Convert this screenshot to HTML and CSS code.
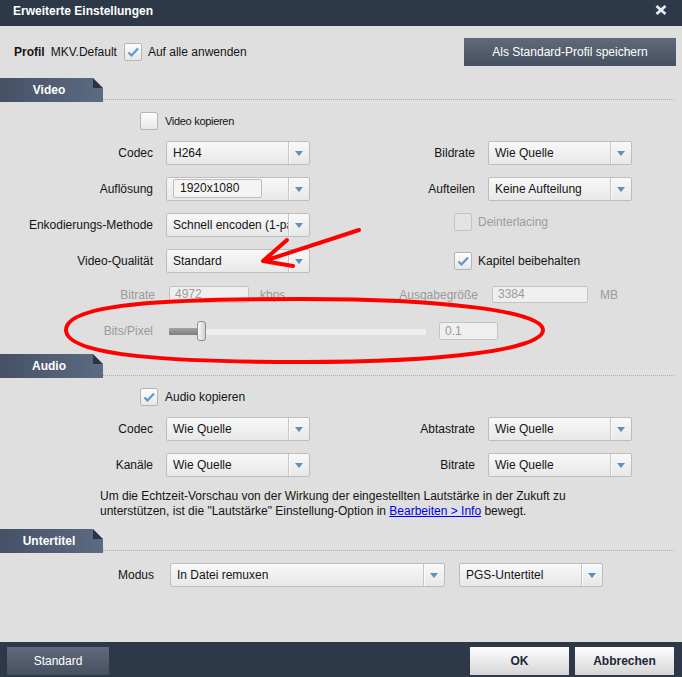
FILE: index.html
```html
<!DOCTYPE html>
<html lang="de">
<head>
<meta charset="utf-8">
<title>Erweiterte Einstellungen</title>
<link rel="stylesheet" href="styles.css">
</head>
<body>
<div class="dialog">
  <header class="titlebar">
    <span class="title">Erweiterte Einstellungen</span>
    <span class="close"><svg width="12" height="10" viewBox="0 0 12 10"><path d="M1.5 1 L10.5 9 M10.5 1 L1.5 9" stroke="#e8ebef" stroke-width="2.8" fill="none"/></svg></span>
  </header>

  <main class="content">
    <div class="profile-row">
      <span class="profile-label">Profil</span>
      <span class="profile-name">MKV.Default</span>
      <span class="check"><svg width="14" height="12" viewBox="0 0 14 12"><path d="M2.5 6.5 L5.5 9.5 L12 2.5" stroke="#5b97d1" stroke-width="2.2" fill="none"/></svg></span>
      <span class="check-text">Auf alle anwenden</span>
      <button class="btn-dark save">Als Standard-Profil speichern</button>
    </div>

    <div class="sec-head"><div class="tab">Video</div><div class="dots"></div></div>

    <div class="check-row">
      <span class="check"></span>
      <span class="small-text">Video kopieren</span>
    </div>

    <div class="grid">
      <span class="lbl">Codec</span>
      <div class="select"><span class="val">H264</span><span class="arr"></span></div>
      <span class="lbl">Bildrate</span>
      <div class="select"><span class="val">Wie Quelle</span><span class="arr"></span></div>

      <span class="lbl">Auflösung</span>
      <div class="select"><span class="val boxed"><span class="inner">1920x1080</span></span><span class="arr"></span></div>
      <span class="lbl">Aufteilen</span>
      <div class="select"><span class="val">Keine Aufteilung</span><span class="arr"></span></div>

      <span class="lbl">Enkodierungs-Methode</span>
      <div class="select"><span class="val">Schnell encoden (1-pass)</span><span class="arr"></span></div>
      <div class="grid-check top disabled">
        <span class="check"></span>
        <span>Deinterlacing</span>
      </div>

      <span class="lbl">Video-Qualität</span>
      <div class="select"><span class="val">Standard</span><span class="arr"></span></div>
      <div class="grid-check">
        <span class="check"><svg width="14" height="12" viewBox="0 0 14 12"><path d="M2.5 6.5 L5.5 9.5 L12 2.5" stroke="#5b97d1" stroke-width="2.2" fill="none"/></svg></span>
        <span>Kapitel beibehalten</span>
      </div>
    </div>

    <div class="drow">
      <div class="dleft">
        <span class="dlabel w-bitrate">Bitrate</span>
        <span class="dinput w80">4972</span>
        <span class="unit">kbps</span>
      </div>
      <div class="dright">
        <span class="dlabel w-size">Ausgabegröße</span>
        <span class="dinput w96">3384</span>
        <span class="unit mb">MB</span>
      </div>
    </div>

    <div class="brow">
      <span class="dlabel w-bits">Bits/Pixel</span>
      <div class="slider">
        <span class="fill"></span>
        <span class="thumb"></span>
        <span class="rest"></span>
      </div>
      <span class="dinput w59">0.1</span>
    </div>

    <div class="sec-head audio-head"><div class="tab">Audio</div><div class="dots"></div></div>

    <div class="check-row">
      <span class="check"><svg width="14" height="12" viewBox="0 0 14 12"><path d="M2.5 6.5 L5.5 9.5 L12 2.5" stroke="#5b97d1" stroke-width="2.2" fill="none"/></svg></span>
      <span>Audio kopieren</span>
    </div>

    <div class="grid">
      <span class="lbl">Codec</span>
      <div class="select"><span class="val">Wie Quelle</span><span class="arr"></span></div>
      <span class="lbl">Abtastrate</span>
      <div class="select"><span class="val">Wie Quelle</span><span class="arr"></span></div>

      <span class="lbl">Kanäle</span>
      <div class="select"><span class="val">Wie Quelle</span><span class="arr"></span></div>
      <span class="lbl">Bitrate</span>
      <div class="select"><span class="val">Wie Quelle</span><span class="arr"></span></div>
    </div>

    <p class="note">Um die Echtzeit-Vorschau von der Wirkung der eingestellten Lautstärke in der Zukuft zu<br>unterstützen, ist die "Lautstärke" Einstellung-Option in <a href="#">Bearbeiten &gt; Info</a> bewegt.</p>

    <div class="sec-head sub-head"><div class="tab">Untertitel</div><div class="dots"></div></div>

    <div class="mrow">
      <span class="lbl w-modus">Modus</span>
      <div class="select wide"><span class="val">In Datei remuxen</span><span class="arr"></span></div>
      <div class="select subsel"><span class="val">PGS-Untertitel</span><span class="arr"></span></div>
    </div>
  </main>

  <footer class="bottombar">
    <button class="btn-dark std">Standard</button>
    <button class="btn-light ok">OK</button>
    <button class="btn-light cancel">Abbrechen</button>
  </footer>
</div>

<svg class="annot" width="682" height="677" viewBox="0 0 682 677">
  <path d="M66 330 C66 302 180 299 304 299 C440 299 543 311 543 330 C543 350 440 362 304 362 C180 362 66 357 66 330 Z" fill="none" stroke="#ff0000" stroke-width="4"/>
  <path d="M359 230 L264 261 M287 240 L263 261 L293 266" fill="none" stroke="#ff0000" stroke-width="4" stroke-linecap="round" stroke-linejoin="round"/>
</svg>
</body>
</html>
```

FILE: styles.css
```css
* { box-sizing: border-box; }
html, body { margin: 0; padding: 0; }
body {
  width: 682px;
  height: 677px;
  overflow: hidden;
  position: relative;
  background: #dfdfdf;
  font-family: "Liberation Sans", Arial, sans-serif;
  font-size: 12px;
  color: #141414;
}
.dialog { display: flex; flex-direction: column; height: 677px; }

.titlebar {
  height: 26px;
  flex: none;
  background: #2d3849;
  color: #fff;
  display: flex;
  align-items: flex-start;
  justify-content: space-between;
  padding: 4px 15px 0 13px;
}
.title { font-weight: bold; line-height: 14px; }
.close { padding-top: 1px; }
.close svg { display: block; }

.content { flex: 1; }

.profile-row {
  display: flex;
  align-items: center;
  height: 28px;
  margin: 12px 6px 0 14px;
}
.profile-label { font-weight: bold; margin-right: 6px; }
.profile-name { margin-right: 7px; }
.check-text { margin-left: 6px; }

.btn-dark {
  height: 28px;
  border: none;
  background: linear-gradient(#606a7a, #465061);
  color: #fff;
  font-family: "Liberation Sans", Arial, sans-serif;
  font-size: 12px;
  padding: 0;
}
.save { margin-left: auto; width: 212px; }

.check {
  flex: none;
  width: 18px;
  height: 18px;
  border: 1px solid #b5b5b5;
  border-radius: 2px;
  background: linear-gradient(#fdfdfd, #e7e7e7);
  display: flex;
  align-items: center;
  justify-content: center;
}
.check svg { display: block; }

.sec-head { display: flex; height: 24px; margin-top: 12px; }
.tab {
  position: relative;
  flex: none;
  width: 103px;
  height: 24px;
  background: linear-gradient(to right, #465165, #5c6b82);
  color: #fff;
  font-weight: bold;
  text-align: center;
  line-height: 24px;
  padding-right: 5px;
  clip-path: polygon(0 0, 93px 0, 103px 10px, 103px 100%, 0 100%);
}
.tab::after {
  content: "";
  position: absolute;
  left: 93px;
  top: 0;
  width: 10px;
  height: 10px;
  background: #2a3343;
  clip-path: polygon(0 0, 100% 100%, 0 100%);
}
.dots {
  flex: 1;
  border-bottom: 1px dotted #a7aeb8;
  margin: 0 8px 2px 0;
}
.audio-head { margin-top: 13px; }
.sub-head { margin-top: 10px; }

.check-row {
  display: flex;
  align-items: center;
  gap: 7px;
  height: 18px;
  margin: 10px 0 0 140px;
}
.small-text { font-size: 11px; letter-spacing: -0.3px; }

.grid {
  display: grid;
  grid-template-columns: 153px 144px 152px 144px;
  grid-auto-rows: 24px;
  column-gap: 13px;
  row-gap: 12px;
  margin-top: 11px;
}
.lbl { text-align: right; align-self: center; white-space: nowrap; }

.select {
  display: flex;
  height: 24px;
  border: 1px solid #bdbdbd;
  border-radius: 2px;
  background: linear-gradient(#f8f8f8, #e8e8e8);
}
.select .val {
  flex: 1;
  min-width: 0;
  padding-left: 6px;
  line-height: 22px;
  white-space: nowrap;
  overflow: hidden;
}
.select .val.boxed { padding: 1px 0 0 6px; line-height: normal; }
.inner {
  display: block;
  width: 89px;
  height: 19px;
  border: 1px solid #bcbcbc;
  border-radius: 2px;
  background: #f4f4f4;
  padding-left: 6px;
  line-height: 17px;
}
.select .arr {
  flex: none;
  width: 21px;
  border-left: 1px solid #c6c6c6;
  box-shadow: inset 1px 0 #fbfbfb;
  display: flex;
  align-items: center;
  justify-content: center;
}
.select .arr::before {
  content: "";
  width: 0;
  height: 0;
  border-left: 4px solid transparent;
  border-right: 4px solid transparent;
  border-top: 5px solid #5a8fbf;
}

.grid-check {
  grid-column: 3 / 5;
  margin-left: 131px;
  display: flex;
  align-items: center;
  gap: 6px;
  align-self: center;
}
.grid-check.top { align-self: start; }
.disabled { color: #9c9c9c; }
.disabled .check { background: #e3e3e3; border-color: #c4c4c4; }

.drow {
  display: flex;
  align-items: center;
  height: 17px;
  margin-top: 13px;
  color: #9a9a9a;
}
.dleft, .dright { display: flex; align-items: center; }
.dleft { width: 310px; }
.dlabel { text-align: right; white-space: nowrap; }
.w-bitrate { width: 155px; margin-right: 14px; }
.w-size { width: 168px; margin-right: 14px; }
.w-bits { width: 153px; margin-right: 16px; }
.dinput {
  height: 17px;
  border: 1px solid #c3c3c3;
  border-radius: 2px;
  background: #efefef;
  padding-left: 5px;
  line-height: 15px;
  color: #9a9a9a;
}
.w80 { width: 80px; }
.w96 { width: 96px; }
.w59 { width: 59px; height: 18px; line-height: 16px; margin-left: 13px; }
.unit { margin-left: 11px; }
.unit.mb { margin-left: 12px; }

.brow {
  display: flex;
  align-items: center;
  height: 20px;
  margin-top: 18px;
  color: #9a9a9a;
}
.slider { display: flex; align-items: center; width: 257px; height: 20px; }
.fill {
  width: 31px;
  height: 7px;
  border-radius: 1px;
  background: linear-gradient(#a3a3a3, #7d7d7d);
}
.thumb {
  width: 9px;
  height: 20px;
  margin-left: -3px;
  border: 1px solid #8d8d8d;
  border-radius: 3px;
  background: linear-gradient(to right, #f7f7f7, #d2d2d2);
  z-index: 1;
}
.rest {
  flex: 1;
  height: 7px;
  margin-left: -1px;
  background: #efefef;
  border-top: 1px solid #e2e2e2;
}

.note {
  margin: 12px 0 0 100px;
  line-height: 15px;
  white-space: nowrap;
}
.note a { color: #0000ee; text-decoration: underline; }

.mrow { display: flex; align-items: center; height: 24px; margin-top: 10px; }
.w-modus { width: 154px; }
.select.wide { width: 275px; margin-left: 16px; }
.select.subsel { width: 144px; margin-left: 14px; }

.bottombar {
  flex: none;
  height: 35px;
  background: #2d3849;
  display: flex;
  align-items: flex-start;
  padding: 5px 8px 0 7px;
}
.std { width: 102px; }
.btn-light {
  height: 28px;
  width: 99px;
  border: none;
  padding: 0;
  background: linear-gradient(#ffffff, #d5d5d5);
  color: #1c2838;
  font-family: "Liberation Sans", Arial, sans-serif;
  font-size: 12px;
  font-weight: bold;
}
.ok { margin-left: auto; }
.cancel { margin-left: 6px; }

.annot { position: absolute; left: 0; top: 0; pointer-events: none; }
```
